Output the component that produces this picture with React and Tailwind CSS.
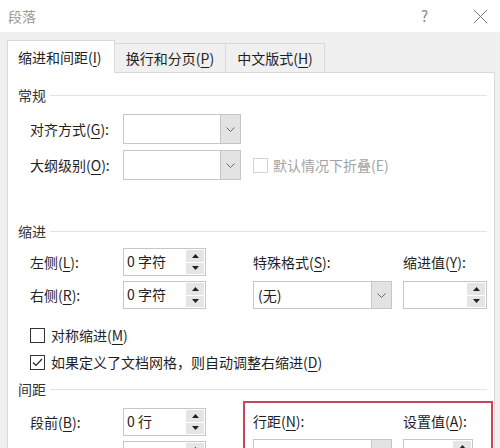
import React from 'react';

const FONT = { fontFamily: '"Noto Sans CJK SC", "Microsoft YaHei", sans-serif' };

function K({ children }) {
  return <span className="underline decoration-1 underline-offset-[3px]">{children}</span>;
}

function Tri({ up }) {
  return (
    <svg width="7" height="4" viewBox="0 0 7 4">
      <polygon points={up ? '0,4 7,4 3.5,0' : '0,0 7,0 3.5,4'} fill="#222" />
    </svg>
  );
}

function Spinner({ value, width }) {
  return (
    <div className="flex h-[28px] border border-[#c6c6c6] bg-white" style={{ width }}>
      <div className="flex-1 pl-[3px] text-[14px] leading-[24px] text-[#222]">{value}</div>
      <div className="flex w-[20px] flex-col gap-px p-px">
        <div className="flex flex-1 items-center justify-center bg-[#e5e5e5]">
          <Tri up />
        </div>
        <div className="flex flex-1 items-center justify-center bg-[#e5e5e5]">
          <Tri />
        </div>
      </div>
    </div>
  );
}

function Select({ value, width, height }) {
  return (
    <div className="flex border border-[#c6c6c6] bg-white" style={{ width, height }}>
      <div className="flex flex-1 items-center pl-[4px] text-[14px] text-[#222]">{value}</div>
      <div className="flex w-[20px] items-center justify-center border-l border-[#c6c6c6] bg-[#e3e3e3]">
        <svg width="9" height="5" viewBox="0 0 9 5">
          <polyline points="0.5,0.5 4.5,4.5 8.5,0.5" fill="none" stroke="#666" strokeWidth="1" />
        </svg>
      </div>
    </div>
  );
}

function Section({ title }) {
  return (
    <div className="flex h-[20px] items-center pr-[7px]">
      <span className="text-[14px] leading-none text-[#333]">{title}</span>
      <div className="ml-[4px] h-px flex-1 bg-[#e2e2e2]" />
    </div>
  );
}

function Check({ checked, disabled }) {
  return (
    <div
      className={
        disabled
          ? 'flex h-[15px] w-[15px] items-center justify-center border border-[#d4d4d4] bg-white'
          : 'flex h-[15px] w-[15px] items-center justify-center border border-[#333] bg-white'
      }
    >
      {checked && (
        <svg width="11" height="9" viewBox="0 0 11 9">
          <polyline points="1,4.5 4,7.5 10,1" fill="none" stroke="#222" strokeWidth="1.2" />
        </svg>
      )}
    </div>
  );
}

export default function App() {
  return (
    <div className="h-[448px] w-[500px] overflow-hidden bg-[#f0f0f0] text-[#1f1f1f]" style={FONT}>
      {/* title bar */}
      <div className="flex h-[32px] items-center bg-white pl-[8px] pr-[12px]">
        <span className="text-[14px] text-[#9a9a9a]">段落</span>
        <span className="ml-auto mr-[45px] text-[15px] text-[#8a8a8a]">?</span>
        <svg width="15" height="15" viewBox="0 0 15 15">
          <path d="M1 1L14 14M14 1L1 14" stroke="#777" strokeWidth="1" />
        </svg>
      </div>

      <div className="pl-[7px] pr-[5px] pt-[8px]">
        {/* tabs */}
        <div className="flex items-end">
          <div className="relative z-10 -mb-px flex h-[33px] w-[108px] items-center border border-b-0 border-[#d9d9d9] bg-white pl-[10px] text-[14px]">
            缩进和间距(<K>I</K>)
          </div>
          <div className="flex h-[29px] w-[111px] items-center justify-center border-r border-t border-[#d9d9d9] bg-[#f0f0f0] text-[14px]">
            换行和分页(<K>P</K>)
          </div>
          <div className="flex h-[29px] w-[99px] items-center justify-center border-r border-t border-[#d9d9d9] bg-[#f0f0f0] text-[14px]">
            中文版式(<K>H</K>)
          </div>
        </div>

        {/* page */}
        <div className="h-[400px] border border-[#d9d9d9] bg-white pl-[10px] pt-[12px]">
          <Section title="常规" />
          <div className="mt-[9px] flex flex-col gap-[6px] pl-[12px] text-[14px]">
            <div className="flex h-[30px] items-center">
              <span className="w-[93px]">对齐方式(<K>G</K>):</span>
              <Select width={118} height={30} />
            </div>
            <div className="flex h-[30px] items-center">
              <span className="w-[93px]">大纲级别(<K>O</K>):</span>
              <Select width={118} height={30} />
              <div className="ml-[12px] flex items-center gap-[5px] text-[#a3a3a3]">
                <Check disabled />
                <span>默认情况下折叠(E)</span>
              </div>
            </div>
          </div>

          <div className="mt-[41px]">
            <Section title="缩进" />
          </div>
          <div className="mt-[7px] flex flex-col gap-[5px] pl-[12px] text-[14px]">
            <div className="flex h-[28px] items-center">
              <span className="w-[93px]">左侧(<K>L</K>):</span>
              <Spinner value="0 字符" width={83} />
              <span className="ml-[47px] w-[150px]">特殊格式(<K>S</K>):</span>
              <span>缩进值(<K>Y</K>):</span>
            </div>
            <div className="flex h-[28px] items-center">
              <span className="w-[93px]">右侧(<K>R</K>):</span>
              <Spinner value="0 字符" width={83} />
              <div className="ml-[47px]">
                <Select value="(无)" width={139} height={28} />
              </div>
              <div className="ml-[11px]">
                <Spinner value="" width={84} />
              </div>
            </div>
          </div>

          <div className="mt-[13px] pl-[12px] text-[14px]">
            <div className="flex h-[27px] items-center gap-[6px]">
              <Check />
              <span>对称缩进(<K>M</K>)</span>
            </div>
            <div className="flex h-[27px] items-center gap-[6px]">
              <Check checked />
              <span>如果定义了文档网格，则自动调整右缩进(<K>D</K>)</span>
            </div>
          </div>

          <div className="mt-[3px]">
            <Section title="间距" />
          </div>
          <div className="mt-[2px] flex pl-[12px] text-[14px]">
            <div className="flex flex-col gap-[5px] pt-[7px]">
              <div className="flex h-[28px] items-center">
                <span className="w-[93px]">段前(<K>B</K>):</span>
                <Spinner value="0 行" width={83} />
              </div>
              <div className="flex h-[28px] items-start">
                <span className="w-[93px]" />
                <Spinner value="" width={83} />
              </div>
            </div>
            <div className="ml-[37px] h-[80px] w-[250px] border-2 border-[#c8465c] pl-[8px]">
              <div className="flex h-[36px] items-center">
                <span className="w-[150px]">行距(<K>N</K>):</span>
                <span>设置值(<K>A</K>):</span>
              </div>
              <div className="flex items-center">
                <Select value="" width={139} height={28} />
                <div className="ml-[11px]">
                  <Spinner value="" width={70} />
                </div>
              </div>
            </div>
          </div>
        </div>
      </div>
    </div>
  );
}
